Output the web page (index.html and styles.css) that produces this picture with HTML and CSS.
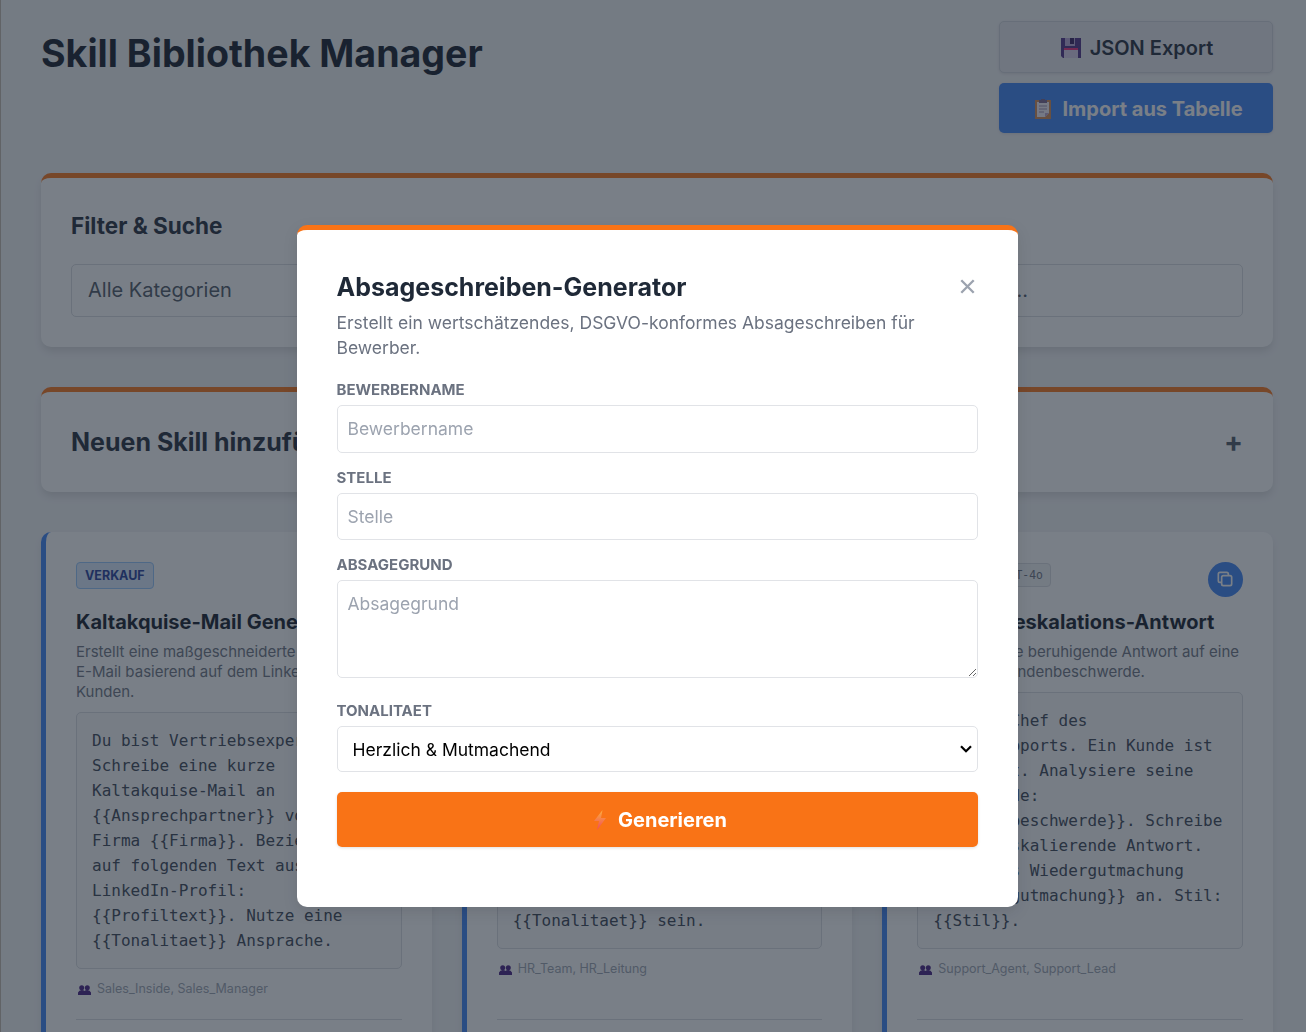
FILE: index.html
```
<!DOCTYPE html>
<html lang="de">
<head>
  <meta charset="UTF-8" />
  <meta name="viewport" content="width=device-width, initial-scale=1.0" />
  <title>Skill Bibliothek Manager</title>
  <link rel="stylesheet" href="styles.css">
</head>
<body>
  <div class="page">
    <header class="header">
      <h1>Skill Bibliothek Manager</h1>
      <div class="actions">
        <button class="btn btn-export">
          <svg class="emoji" viewBox="0 0 20 20"><path d="M0 0h20v20H2l-2-2z" fill="#4b2c86"/><path d="M4 0h10v8H4z" fill="#b9a6d6"/><path d="M9 0h4v6H9z" fill="#321b5e"/><path d="M3 10h14v10H3z" fill="#d9cce8"/><path d="M3 10h14v2H3z" fill="#f0287a"/></svg>
          JSON Export
        </button>
        <button class="btn btn-import">
          <svg class="emoji" viewBox="0 0 20 20"><path d="M2 1h16v19H2z" fill="#d58a52"/><path d="M4 3h12v11l-4 4H4z" fill="#f6f0fa"/><path d="M12 18v-4h4z" fill="#b9a3cc"/><path d="M6 1h2a2 2 0 0 1 4 0h2v3H6z" fill="#75618c"/><path d="M6 7h8M6 10h8M6 13h5" stroke="#9a8cae" stroke-width="1"/></svg>
          Import aus Tabelle
        </button>
      </div>
    </header>

    <section class="panel">
      <h2>Filter &amp; Suche</h2>
      <div class="filters">
        <div class="filter-field">Alle Kategorien</div>
        <div class="filter-field">Suche in Titel, Beschreibung, Tags...</div>
      </div>
    </section>

    <section class="panel panel-new">
      <h2>Neuen Skill hinzufügen</h2>
      <span class="plus">+</span>
    </section>

    <main class="cards">
      <article class="card">
        <div class="card-top">
          <span class="tag">Verkauf</span>
        </div>
        <h3>Kaltakquise-Mail Generator</h3>
        <p class="desc">Erstellt eine maßgeschneiderte<br>E-Mail basierend auf dem LinkedIn<br>Kunden.</p>
        <div class="prompt">Du bist Vertriebsexperte.
Schreibe eine kurze
Kaltakquise-Mail an
{{Ansprechpartner}} von
Firma {{Firma}}. Beziehe dich
auf folgenden Text aus dem
LinkedIn-Profil:
{{Profiltext}}. Nutze eine
{{Tonalitaet}} Ansprache.</div>
        <div class="roles">
          <svg class="people" viewBox="0 0 13 10"><circle cx="3.7" cy="2.8" r="2.5"/><circle cx="9.3" cy="2.8" r="2.5"/><path d="M0 10V7.5Q1 5 3.7 5q2 0 2.8 1Q7.3 5 9.3 5 12 5 13 7.5V10z"/></svg>
          Sales_Inside, Sales_Manager
        </div>
        <div class="card-foot"></div>
      </article>

      <article class="card">
        <div class="card-top">
          <span class="tag">HR</span>
        </div>
        <h3>Absageschreiben-Generator</h3>
        <p class="desc">Erstellt ein wertschätzendes,<br>DSGVO-konformes Absageschreiben.</p>
        <div class="prompt">Du bist HR-Manager.
Schreibe eine Absage an
{{Bewerbername}} für die
Stelle {{Stelle}}.
Der Grund ist:
{{Absagegrund}}.
Bleibe wertschätzend.
Der Ton soll
{{Tonalitaet}} sein.</div>
        <div class="roles">
          <svg class="people" viewBox="0 0 13 10"><circle cx="3.7" cy="2.8" r="2.5"/><circle cx="9.3" cy="2.8" r="2.5"/><path d="M0 10V7.5Q1 5 3.7 5q2 0 2.8 1Q7.3 5 9.3 5 12 5 13 7.5V10z"/></svg>
          HR_Team, HR_Leitung
        </div>
        <div class="card-foot"></div>
      </article>

      <article class="card">
        <div class="card-top">
          <div class="tags">
            <span class="tag">Service</span>
            <span class="model">GPT-4o</span>
          </div>
          <button class="copy">
            <svg viewBox="0 0 24 24" fill="none" stroke="currentColor" stroke-width="2" stroke-linecap="round" stroke-linejoin="round"><path d="M8 16H6a2 2 0 0 1-2-2V6a2 2 0 0 1 2-2h8a2 2 0 0 1 2 2v2m-6 12h8a2 2 0 0 0 2-2v-8a2 2 0 0 0-2-2h-8a2 2 0 0 0-2 2v8a2 2 0 0 0 2 2z"/></svg>
          </button>
        </div>
        <h3>Ticket-Deeskalations-Antwort</h3>
        <p class="desc">Formuliert eine beruhigende Antwort auf eine<br>schwierige Kundenbeschwerde.</p>
        <div class="prompt">Du bist Chef des
Kundensupports. Ein Kunde ist
verärgert. Analysiere seine
Beschwerde:
{{Kundenbeschwerde}}. Schreibe
eine deeskalierende Antwort.
Biete als Wiedergutmachung
{{Wiedergutmachung}} an. Stil:
{{Stil}}.</div>
        <div class="roles">
          <svg class="people" viewBox="0 0 13 10"><circle cx="3.7" cy="2.8" r="2.5"/><circle cx="9.3" cy="2.8" r="2.5"/><path d="M0 10V7.5Q1 5 3.7 5q2 0 2.8 1Q7.3 5 9.3 5 12 5 13 7.5V10z"/></svg>
          Support_Agent, Support_Lead
        </div>
        <div class="card-foot"></div>
      </article>
    </main>
  </div>

  <div class="overlay">
    <div class="modal">
      <div class="modal-head">
        <h2>Absageschreiben-Generator</h2>
        <button class="close">
          <svg viewBox="0 0 14 14"><path d="M1.2 1.2l11.6 11.6M12.8 1.2L1.2 12.8" stroke="currentColor" stroke-width="2.2"/></svg>
        </button>
      </div>
      <p class="modal-desc">Erstellt ein wertschätzendes, DSGVO-konformes Absageschreiben für Bewerber.</p>

      <form class="form">
        <label for="name">Bewerbername</label>
        <input id="name" type="text" placeholder="Bewerbername">

        <label for="stelle">Stelle</label>
        <input id="stelle" type="text" placeholder="Stelle">

        <label for="grund">Absagegrund</label>
        <textarea id="grund" placeholder="Absagegrund"></textarea>

        <label for="ton">Tonalitaet</label>
        <div class="select">
          <select id="ton">
            <option>Herzlich &amp; Mutmachend</option>
            <option>Sachlich</option>
          </select>
          <svg viewBox="0 0 12 8"><path d="M1 1.2l5 5 5-5" fill="none" stroke="#000" stroke-width="2.2"/></svg>
        </div>

        <button type="button" class="generate">
          <svg class="bolt" viewBox="0 0 12 20"><defs><linearGradient id="flash" x1="0" y1="0" x2="0" y2="1"><stop offset="0" stop-color="#fbb040"/><stop offset="1" stop-color="#f04a5a"/></linearGradient></defs><path d="M8.5 0L0 11h5L3 20l9-12H7z" fill="url(#flash)"/></svg>
          Generieren
        </button>
      </form>
    </div>
  </div>
</body>
</html>
```
FILE: styles.css
```
* {
  box-sizing: border-box;
}

body {
  margin: 0;
  background: #f3f4f6;
  font-family: Inter, sans-serif;
  color: #1f2937;
}

h1, h2, h3, p {
  margin: 0;
}

button, input, textarea, select {
  font-family: inherit;
}

.page {
  height: 100vh;
  overflow: hidden;
  padding: 21px 33px 0 41px;
}

.header {
  display: flex;
  justify-content: space-between;
  align-items: flex-start;
  margin-bottom: 40px;
}

h1 {
  font-size: 37.6px;
  line-height: 45px;
  padding-top: 10px;
  color: #111827;
}

.actions {
  display: flex;
  flex-direction: column;
  gap: 10px;
  width: 274px;
}

.btn {
  display: flex;
  align-items: center;
  justify-content: center;
  gap: 9px;
  height: 52px;
  padding: 1px 4px 0 6px;
  border: none;
  border-radius: 5px;
  font-size: 20px;
  font-weight: 600;
  box-shadow: 0 1px 3px rgba(0, 0, 0, 0.1);
}

.btn-export {
  background: #e9e8ee;
  border: 1px solid #d1d5db;
  color: #1f2937;
}

.btn-import {
  height: 50px;
  padding: 2px 4px 0 8px;
  background: #3b82f6;
  color: #fff;
  font-weight: 700;
}

.emoji {
  width: 20px;
  height: 20px;
}

.panel {
  border-top: 5px solid #f97316;
  border-radius: 10px;
  background: #fff;
  padding: 30px;
  margin-bottom: 40px;
  box-shadow: 0 5px 8px -1px rgba(0, 0, 0, 0.12);
}

.panel h2 {
  font-size: 22.5px;
  line-height: 35px;
}

.filters {
  display: grid;
  grid-template-columns: 1fr 1fr;
  gap: 20px;
  margin-top: 21px;
}

.filter-field {
  height: 52.5px;
  border: 1px solid #d9dbe0;
  border-radius: 5px;
  padding: 0 16px;
  font-size: 20px;
  line-height: 51px;
  color: #4b5563;
  white-space: nowrap;
}

.panel-new {
  display: flex;
  justify-content: space-between;
  align-items: center;
}

.panel-new h2 {
  font-size: 25px;
  line-height: 40px;
}

.plus {
  font-size: 28px;
  line-height: 40px;
  font-weight: 700;
  color: #4b5563;
}

.cards {
  display: grid;
  grid-template-columns: repeat(3, 1fr);
  gap: 30px;
}

.card {
  display: flex;
  flex-direction: column;
  min-width: 0;
  height: 559px;
  padding: 30px;
  border-left: 5px solid #3b82f6;
  border-radius: 10px;
  background: #fff;
  box-shadow: 0 5px 8px -1px rgba(0, 0, 0, 0.1);
}

.card-top {
  display: flex;
  justify-content: space-between;
  align-items: flex-start;
  height: 45px;
}

.tags {
  display: flex;
  gap: 5px;
}

.tag {
  height: 27px;
  padding: 0 8px;
  border: 1px solid #93c5fd;
  border-radius: 4px;
  background: #dbeafe;
  color: #1e3a9a;
  font-size: 12.5px;
  line-height: 25px;
  font-weight: 700;
  text-transform: uppercase;
}

.model {
  height: 24px;
  margin-top: 1px;
  padding: 0 7px;
  border: 1px solid #d9dbe0;
  border-radius: 4px;
  background: #f3f4f6;
  color: #6b7280;
  font-family: "DejaVu Sans Mono", monospace;
  font-size: 11.4px;
  line-height: 22px;
}

.copy {
  display: flex;
  align-items: center;
  justify-content: center;
  width: 35px;
  height: 35px;
  padding: 0;
  border: none;
  border-radius: 50%;
  background: #3b82f6;
  color: #fff;
}

.copy svg {
  width: 20px;
  height: 20px;
}

.card h3 {
  font-size: 20px;
  line-height: 30px;
  color: #111827;
  white-space: nowrap;
}

.desc {
  margin: 5px 0 10px;
  font-size: 15px;
  line-height: 20px;
  color: #6b7280;
  white-space: nowrap;
}

.prompt {
  padding: 15px;
  border: 1px solid #d9dbe0;
  border-radius: 5px;
  background: #f9fafb;
  color: #374151;
  font-family: "DejaVu Sans Mono", monospace;
  font-size: 16px;
  line-height: 25px;
  white-space: pre;
  overflow: hidden;
}

.roles {
  display: flex;
  align-items: center;
  gap: 6px;
  height: 20px;
  margin-top: 10px;
  padding-left: 2px;
  font-size: 12.5px;
  color: #9ca3af;
}

.people {
  width: 13px;
  height: 10px;
  margin-top: 2px;
  fill: #43197f;
}

.card-foot {
  height: 71px;
  margin-top: auto;
  margin-bottom: -29px;
  border-top: 1px solid #d9dbe0;
}

.overlay {
  position: fixed;
  inset: 0;
  display: flex;
  justify-content: center;
  align-items: flex-start;
  padding: 225px 0 0 7px;
  border-left: 1px solid #616366;
  background: rgba(31, 41, 55, 0.6);
  background-clip: padding-box;
}

.modal {
  width: 721px;
  height: 682px;
  padding: 40px;
  border-top: 5px solid #f97316;
  border-radius: 10px;
  background: #fff;
  box-shadow: 0 5px 15px rgba(0, 0, 0, 0.1);
}

.modal-head {
  display: flex;
  justify-content: space-between;
}

.modal-head h2 {
  font-size: 25px;
  line-height: 35px;
  color: #1f2937;
}

.close {
  display: flex;
  align-items: center;
  padding: 0 3px 2px;
  border: none;
  background: none;
  color: #9ca3af;
}

.close svg {
  width: 15px;
  height: 15px;
}

.modal-desc {
  margin: 5px 0 20px;
  font-size: 17.5px;
  line-height: 25px;
  color: #6b7280;
}

.form {
  display: flex;
  flex-direction: column;
}

.form label {
  margin-bottom: 5px;
  font-size: 15px;
  line-height: 20px;
  font-weight: 700;
  color: #6b7280;
  text-transform: uppercase;
}

.form input,
.form textarea,
.form select {
  border: 1px solid #e1e3e7;
  border-radius: 5px;
  background: #fff;
  padding: 10px;
  font-size: 17.5px;
  outline: none;
}

.form input {
  height: 47.5px;
  margin-bottom: 15px;
}

.form textarea {
  height: 98px;
  margin-bottom: 22.5px;
  line-height: 26px;
}

.select {
  position: relative;
  display: flex;
  margin-bottom: 20px;
}

.form select {
  width: 100%;
  height: 46px;
  padding: 1px 15px 0;
  color: #000;
  appearance: none;
}

.select svg {
  position: absolute;
  right: 6px;
  top: 19px;
  width: 12px;
  height: 8px;
}

::placeholder {
  color: #9ca3af;
}

.generate {
  display: flex;
  align-items: center;
  justify-content: center;
  gap: 12px;
  height: 55px;
  padding: 1px 0 0 7px;
  border: none;
  border-radius: 5px;
  background: #f97316;
  color: #fff;
  font-size: 20px;
  font-weight: 700;
  box-shadow: 0 1px 3px rgba(0, 0, 0, 0.12);
}

.bolt {
  width: 12px;
  height: 20px;
}
```
